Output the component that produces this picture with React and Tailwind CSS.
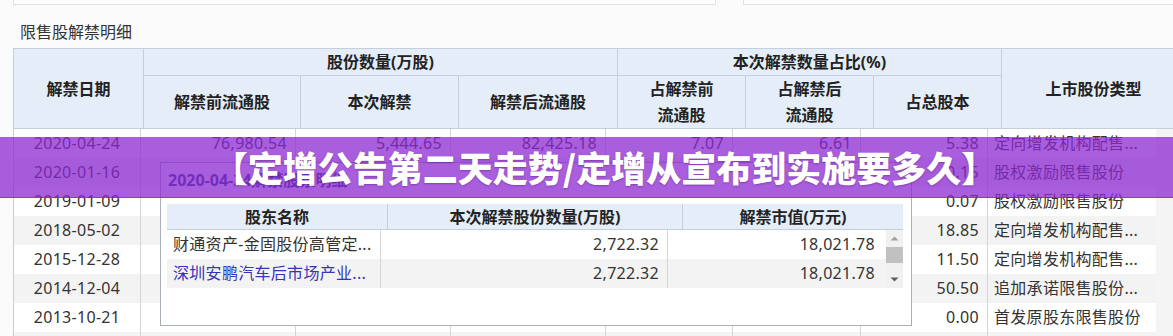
import React from "react";

const FONT = { fontFamily: '"Noto Sans", "Noto Sans CJK SC", sans-serif' };

const rows = [
  ["2020-04-24", "76,980.54", "5,444.65", "82,425.18", "7.07", "6.61", "5.38", "定向增发机构配售..."],
  ["2020-01-16", "84,105.20", "96.40", "84,201.60", "0.11", "0.11", "0.15", "股权激励限售股份"],
  ["2019-01-09", "83,980.13", "45.07", "84,025.20", "0.05", "0.05", "0.07", "股权激励限售股份"],
  ["2018-05-02", "52,018.29", "12,122.46", "64,140.75", "23.30", "18.90", "18.85", "定向增发机构配售..."],
  ["2015-12-28", "40,062.00", "6,630.44", "46,692.44", "16.55", "14.20", "11.50", "定向增发机构配售..."],
  ["2014-12-04", "18,230.10", "32,466.00", "50,696.10", "178.09", "64.04", "50.50", "追加承诺限售股份..."],
  ["2013-10-21", "18,230.10", "0.00", "18,230.10", "0.00", "0.00", "0.00", "首发原股东限售股份"],
  ["2013-04-22", "12,100.00", "6,130.10", "18,230.10", "50.66", "33.63", "33.63", "首发原股东限售股份"],
];

const holders = [
  { name: "财通资产-金固股份高管定...", qty: "2,722.32", value: "18,021.78", link: false },
  { name: "深圳安鹏汽车后市场产业...", qty: "2,722.32", value: "18,021.78", link: true },
];

function HeadCell({ children, className = "" }) {
  return (
    <div
      className={
        "flex items-center justify-center text-center border-r border-b border-[#c3cfdd] font-bold text-[16px] leading-[26px] text-[#222] " +
        className
      }
    >
      {children}
    </div>
  );
}

function Scrollbar({ thumb }) {
  return (
    <div className="w-[17px] bg-[#f1f1f1] flex flex-col items-center">
      <svg width="17" height="17" viewBox="0 0 17 17" className="shrink-0">
        <path d="M4.5 10.5 L8.5 6.5 L12.5 10.5 Z" fill="#a3a3a3" />
      </svg>
      {thumb && <div className="w-[17px] h-[16px] bg-[#c1c1c1] shrink-0" />}
      <div className="flex-1" />
      <svg width="17" height="17" viewBox="0 0 17 17" className="shrink-0">
        <path d="M4.5 6.5 L8.5 10.5 L12.5 6.5 Z" fill="#606060" />
      </svg>
    </div>
  );
}

export default function App() {
  return (
    <div className="relative w-[1173px] h-[336px] overflow-hidden bg-[#fbfbfc] text-[#333]" style={FONT}>
      {/* cards cut off above */}
      <div className="flex">
        <div className="ml-[13px] w-[703px] h-[5px] bg-white border-x border-b border-[#dfe2e7]" />
        <div className="ml-[27px] flex-1 h-[5px] bg-white border-l border-b border-[#dfe2e7]" />
      </div>

      <div className="mt-[15px] pl-[20px] h-[24px] leading-[24px] text-[16px] text-[#333]">限售股解禁明细</div>

      {/* main table */}
      <div className="mt-[4px] ml-[13px] w-[1172px]">
        <div className="grid grid-cols-[130px_157px_158px_159px_128px_128px_128px_184px] grid-rows-[27px_53px] border-t border-l border-[#c3cfdd] bg-[#e4edf8]">
          <HeadCell className="row-span-2">解禁日期</HeadCell>
          <HeadCell className="col-span-3">股份数量(万股)</HeadCell>
          <HeadCell className="col-span-3">本次解禁数量占比(%)</HeadCell>
          <HeadCell className="row-span-2">上市股份类型</HeadCell>
          <HeadCell>解禁前流通股</HeadCell>
          <HeadCell>本次解禁</HeadCell>
          <HeadCell>解禁后流通股</HeadCell>
          <HeadCell>
            占解禁前
            <br />
            流通股
          </HeadCell>
          <HeadCell>
            占解禁后
            <br />
            流通股
          </HeadCell>
          <HeadCell>占总股本</HeadCell>
        </div>
        <div className="flex">
          <div className="w-[1143px] border-l border-[#c3cfdd]">
            {rows.map((r, i) => (
              <div
                key={i}
                className={
                  "grid grid-cols-[127px_155px_155px_155px_127px_128px_127px_169px] h-[29px] text-[16px] leading-[29px] tracking-[0.3px] " +
                  (i % 2 === 1 ? "bg-[#f3f3f3]" : "bg-white")
                }
              >
                <div className="text-center border-r border-[#d6d6d6]">{r[0]}</div>
                {r.slice(1, 7).map((v, j) => (
                  <div key={j} className="text-right pr-[8px] border-r border-[#d6d6d6]">
                    {v}
                  </div>
                ))}
                <div className="pl-[6px] border-r border-[#d6d6d6] whitespace-nowrap overflow-hidden">{r[7]}</div>
              </div>
            ))}
          </div>
          <div className="w-[17px] bg-[#f4f4f4]" />
        </div>
      </div>

      {/* holders popup */}
      <div className="absolute left-[160px] top-[162px] w-[752px] h-[164px] bg-white border border-[#a9b0bb] pl-[6px] pr-[8px]">
        <div className="mt-[5px] h-[24px] leading-[24px] pl-[1px] text-[16px] font-bold text-[#23417a]">
          2020-04-24解禁股东明细
        </div>
        <div className="mt-[12px] w-[736px]">
          <div className="grid grid-cols-[221px_295px_220px] h-[26px] bg-[#e4edf8] text-[16px] font-bold text-[#222] leading-[26px] border-b border-[#c3cfdd]">
            <div className="text-center border-r border-[#c3cfdd]">股东名称</div>
            <div className="text-center border-r border-[#c3cfdd]">本次解禁股份数量(万股)</div>
            <div className="text-center">解禁市值(万元)</div>
          </div>
          <div className="flex h-[58px]">
            <div className="w-[719px]">
              {holders.map((h, i) => (
                <div
                  key={i}
                  className={
                    "grid grid-cols-[214px_287px_218px] h-[29px] text-[16px] leading-[29px] tracking-[0.3px] " +
                    (i % 2 === 1 ? "bg-[#f3f3f3]" : "bg-white")
                  }
                >
                  <div
                    className={
                      "pl-[6px] border-r border-[#d6d6d6] whitespace-nowrap overflow-hidden " +
                      (h.link ? "text-[#3535b8]" : "text-[#333]")
                    }
                  >
                    {h.name}
                  </div>
                  <div className="text-right pr-[8px] border-r border-[#d6d6d6]">{h.qty}</div>
                  <div className="text-right pr-[11px]">{h.value}</div>
                </div>
              ))}
            </div>
            <Scrollbar thumb />
          </div>
        </div>
      </div>

      {/* purple banner overlay */}
      <div className="absolute left-0 right-0 top-[137px] h-[61px] bg-[rgba(140,40,210,0.75)] border-b border-[rgba(110,30,170,0.5)] flex items-center justify-center pl-[36px]">
        <span
          className="text-white font-black text-[35px] leading-[40px] whitespace-nowrap [text-shadow:0_1px_2px_rgba(60,0,100,0.35)]"
          style={{ fontFamily: '"Noto Sans CJK SC", sans-serif' }}
        >
          【定增公告第二天走势/定增从宣布到实施要多久】
        </span>
      </div>
    </div>
  );
}
